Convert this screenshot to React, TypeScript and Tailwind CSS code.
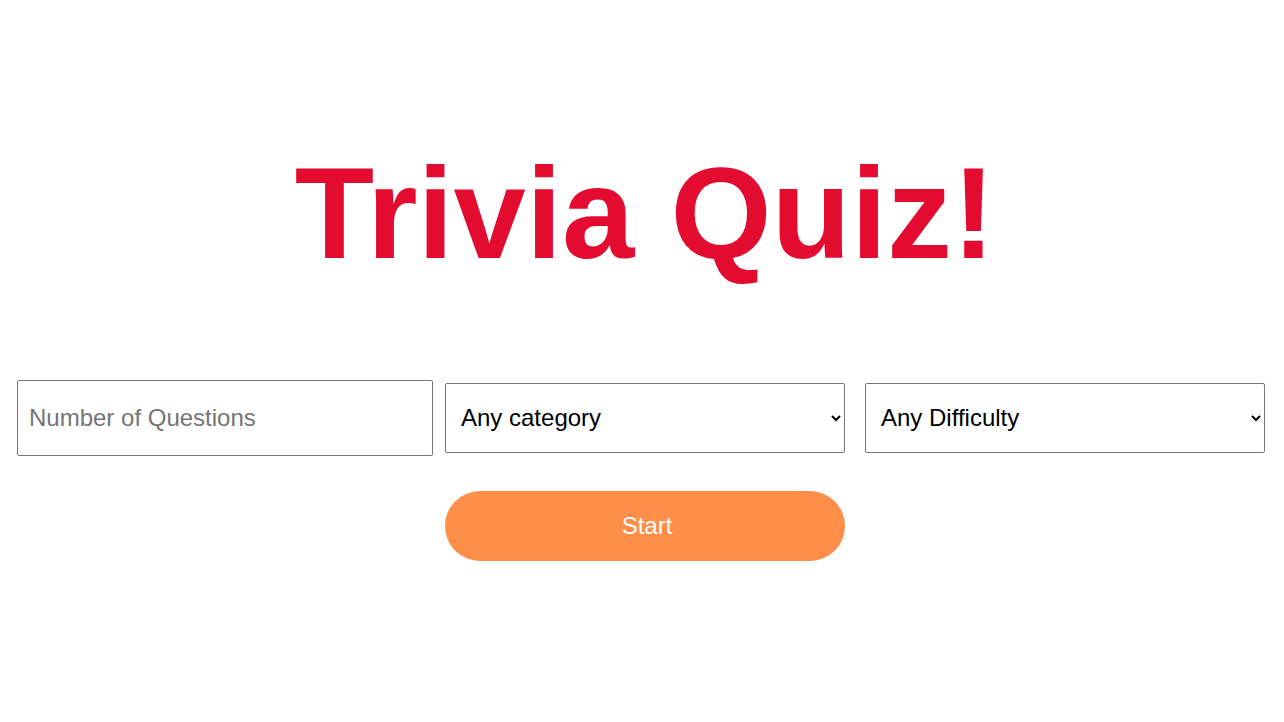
export default function App() {
  return (
    <div className="min-h-[722px] w-[1284px] bg-white font-['Liberation_Sans',Arial,sans-serif]">
      <div className="pt-[140px] flex flex-col">
        <h1 className="text-center text-[130px] font-bold text-[#e30b30] leading-[146px] pl-[6px]">Trivia Quiz!</h1>
        <div className="mt-[94px] flex items-center">
          <input
            type="number"
            placeholder="Number of Questions"
            className="ml-[17px] w-[416px] h-[76px] border border-[#767676] rounded-[2px] px-[11px] text-[24px] text-black placeholder:text-[#757575] outline-none"
          />
          <select className="ml-[12px] w-[400px] h-[70px] border border-[#767676] rounded-[2px] pl-[11px] pr-[6px] pb-[2px] text-[24px] text-black bg-white">
            <option>Any category</option>
          </select>
          <select className="ml-[20px] w-[400px] h-[70px] border border-[#767676] rounded-[2px] pl-[11px] pr-[6px] pb-[2px] text-[24px] text-black bg-white">
            <option>Any Difficulty</option>
          </select>
        </div>
        <div className="mt-[35px] flex">
          <button className="ml-[445px] w-[400px] h-[70px] rounded-full bg-[#fe8e48] text-white text-[24px] pl-[4px]">Start</button>
        </div>
      </div>
    </div>
  );
}
